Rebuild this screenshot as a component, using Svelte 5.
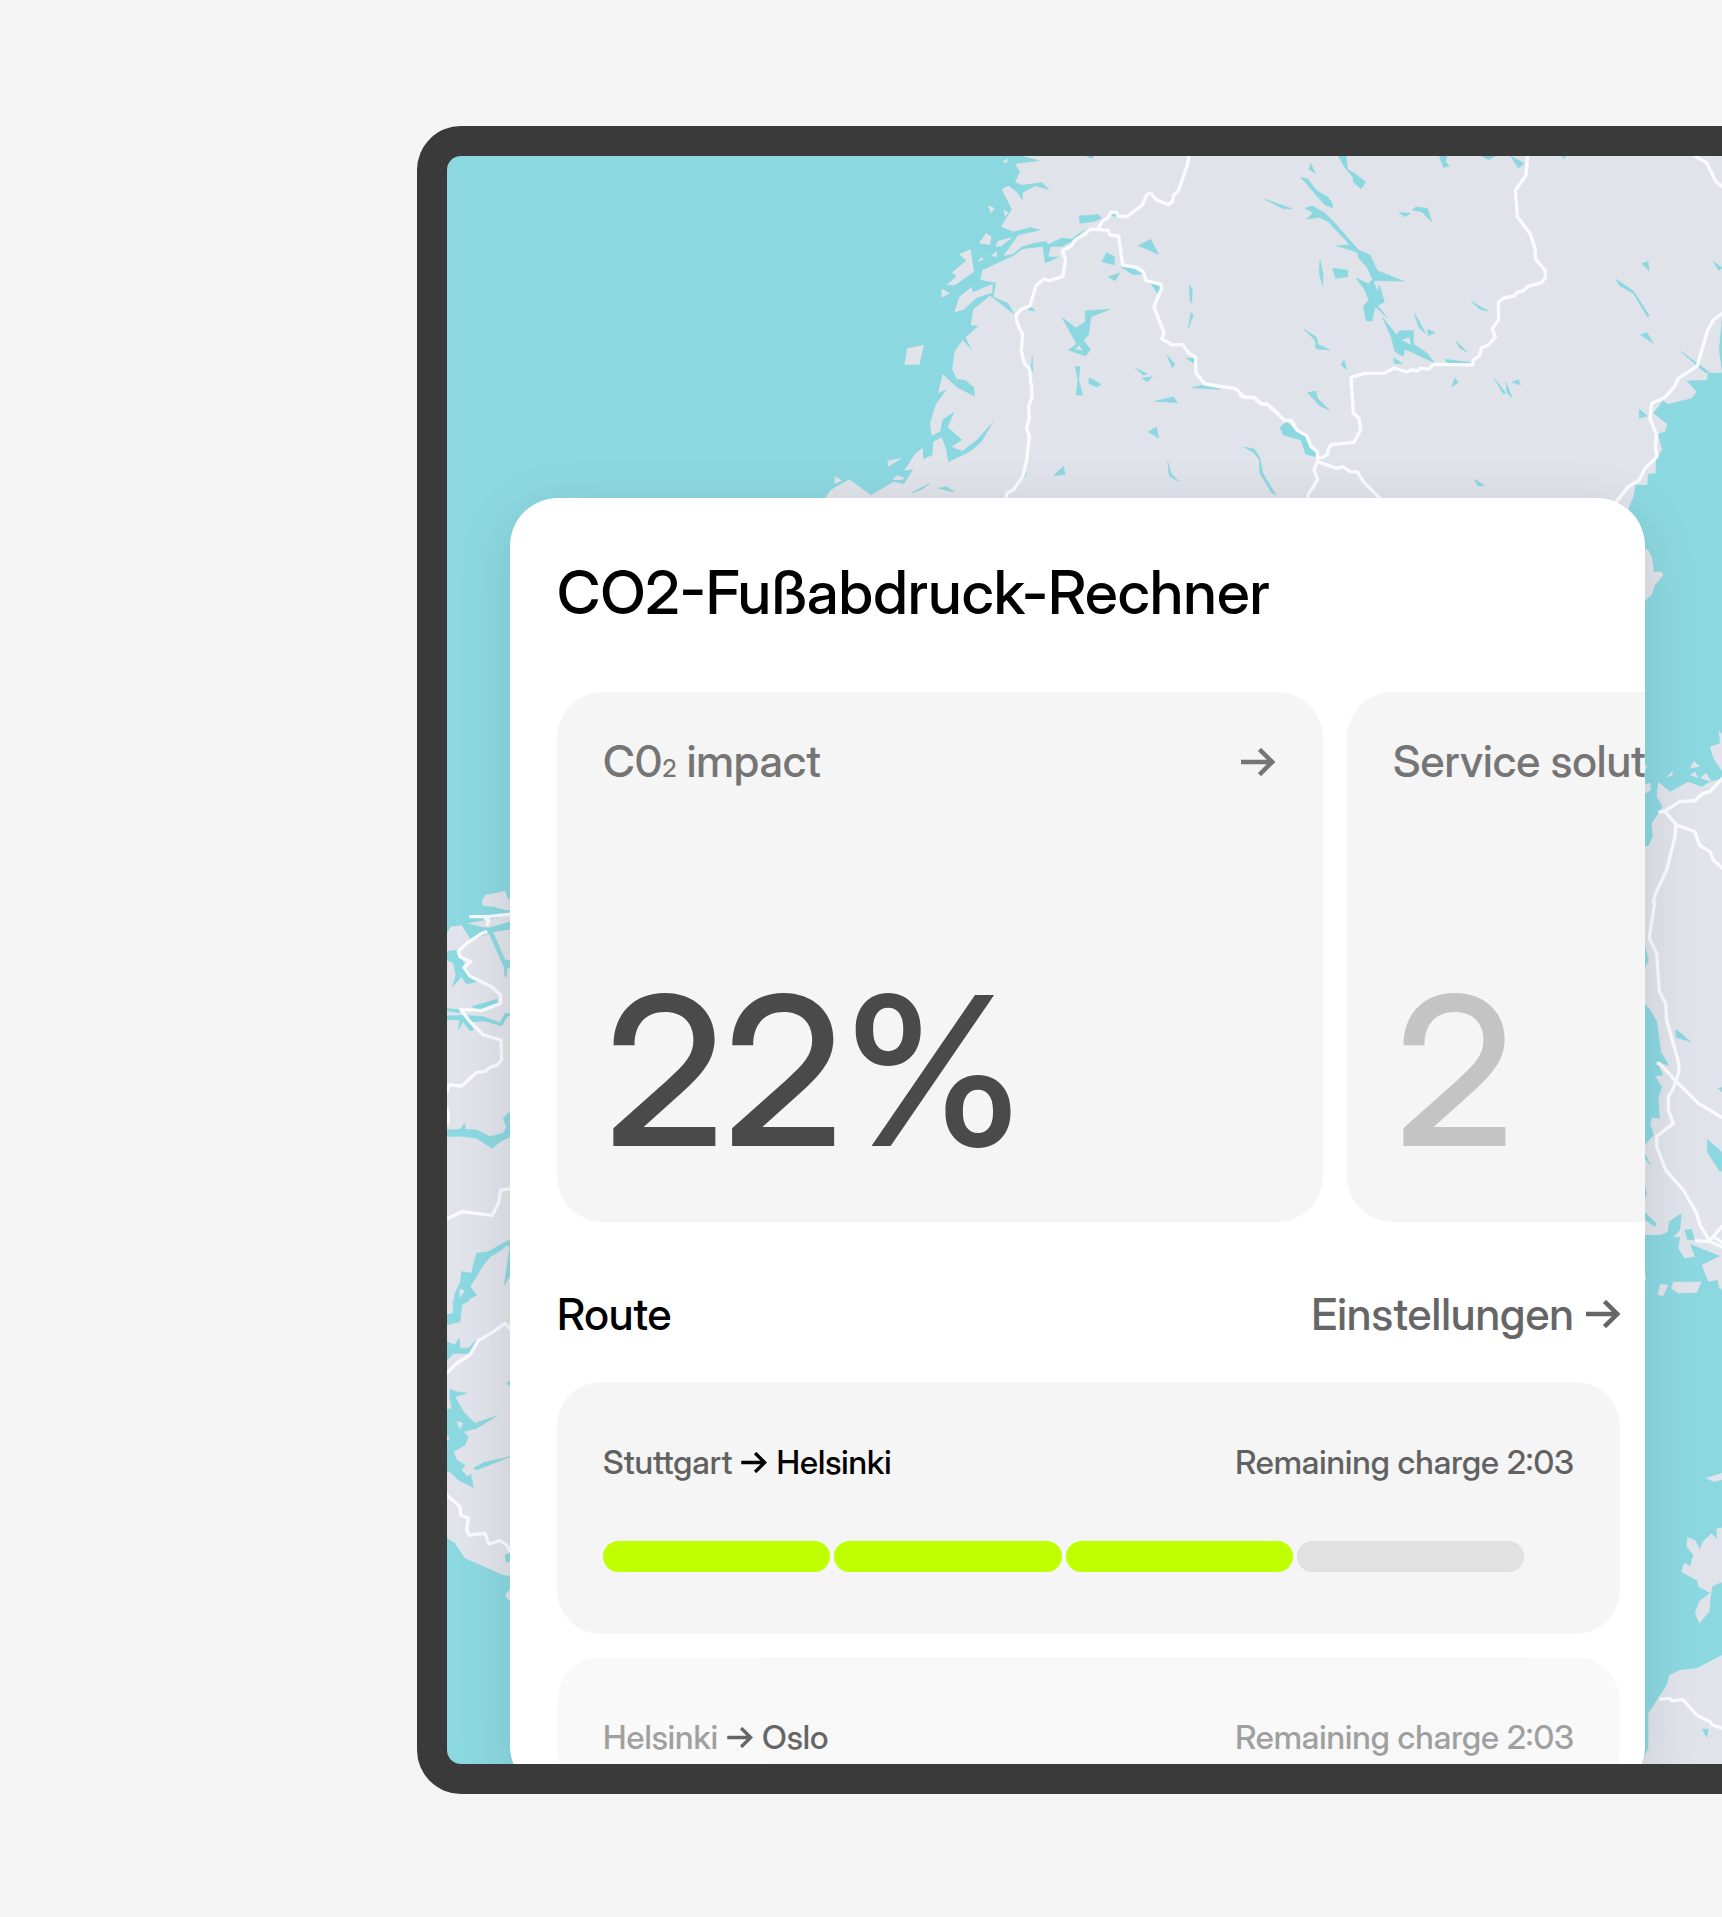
<script>
  const stats = [
    { id: 'impact', value: '22%', muted: false },
    { id: 'service', label: 'Service solut', value: '2', muted: true }
  ];

  const routes = [
    { from: 'Stuttgart', to: 'Helsinki', remaining: '2:03', charge: 3, faded: false },
    { from: 'Helsinki', to: 'Oslo', remaining: '2:03', charge: 0, faded: true }
  ];

  const segments = [1, 2, 3, 4];
</script>

{#snippet arrow()}
  <svg class="arrow" viewBox="0 0 34 28" aria-hidden="true">
    <path d="M0 14H31M18.5 1.4 31.2 14 18.5 26.6" />
  </svg>
{/snippet}

<main class="page">
  <section class="device">
    <svg class="map" viewBox="447 156 1275 1608" preserveAspectRatio="xMinYMin slice" aria-hidden="true">
      <!-- Norwegian coast and inland Sweden -->
      <g transform="translate(800 150) scale(.33333)">
        <path class="land" d="M655 15 720 32 645 42 660 65 645 97 668 105 725 97 750 120 705 108 668 128V152L650 125 625 107 605 118 635 178 603 230 640 245 690 232 725 240 655 255 610 318 640 312 665 290 700 280 738 273 745 283 785 263 815 266 865 230 820 272 785 290 752 290 745 320 780 320 735 340 728 290 668 297 640 318 547 360 541 390 588 398 580 440 625 460 645 495 570 437 520 478 512 525 535 528 497 562 515 600 488 570 463 605 457 658 470 687 495 690 522 712 525 740 470 712 428 672 414 730 440 718 408 762 390 820 395 857 420 845 428 808 463 786 443 832 487 870 455 890 487 903 530 870 582 812 545 875 510 905 445 936 437 893 425 862 400 875 397 915 370 928 368 893 345 912 312 962 340 957 312 1002 280 995 213 1036 148 988 92 1020 75 1045V1090H2480L2500 1040 2507 1005H2542L2544 972 2567 970 2568 925 2587 900 2573 852 2595 845 2602 823 2560 790 2588 752 2605 762 2675 745 2690 725 2660 692 2720 690 2725 668H2766L2757 600 2766 500V15Z" />
        <path class="land" d="M607 35 624 25 620 40ZM563 165 585 175 573 190ZM610 178 626 188 615 200ZM537 280 558 249 574 260 570 285ZM587 290 593 273 637 262 605 288ZM572 318 590 303 592 320ZM532 335 545 320 551 330ZM477 312 512 298 522 365 490 388 465 406 440 405 470 378 455 368 498 332ZM425 416 450 430 425 443ZM463 487 478 440 515 411 518 427 578 402 577 428 530 443 490 480ZM322 595 372 585 358 644H313ZM262 932 305 924 265 950ZM106 979 127 992 102 1001ZM278 990 290 976 315 984 305 990Z" />
        <path class="water" d="M838 198 895 194 905 205 882 214 840 220ZM930 190H950L945 200ZM1015 287 1052 268 1075 313 1035 295ZM920 308 943 320V345L906 335ZM925 380 960 369 945 392ZM962 350 1000 356 1026 372 1000 374ZM1052 400 1084 405 1073 430ZM1168 405 1177 420 1175 460 1170 450ZM1173 488 1180 495 1165 535ZM856 483 930 478 873 500 866 553 850 572 872 598 856 618 806 600 830 582 787 503 828 534 856 515ZM826 650H840L836 690 848 735H828L834 690ZM868 683 903 703 890 711 866 700ZM1006 654 1042 672 1030 675ZM1026 685 1057 680 1042 695ZM1101 616 1125 642 1117 653ZM1160 625 1183 625 1182 640ZM1063 754 1120 741 1133 758ZM1045 846 1069 831 1076 864ZM761 977 790 949 795 973ZM1103 935 1113 970 1136 995 1108 978ZM337 1028 390 1000 362 1020ZM414 1015 440 1010 463 1026ZM690 465 705 483 685 480ZM697 620 699 665 693 655ZM680 970 668 987 660 985ZM1175 713 1215 705 1258 718ZM860 18H880L876 26Z" />
        <path class="land" d="M824 597 838 586 848 602Z" />
        <path class="road" d="M1168 15 1160 52 1135 122 1120 137 1117 155 1105 164 1070 150 1052 129 1040 135 1027 165 980 200 955 198 950 187H932L925 203 908 213 892 238 870 238 855 253 825 270 815 287 787 302 797 330 788 380 748 392 732 387 708 407 690 468 665 477 648 495 650 513 660 540 668 550 664 605 673 640 688 655 697 738 686 770 688 805 680 835 688 858 680 930 668 980 640 1020 620 1030 618 1050" />
        <path class="road" d="M892 238 925 241 930 255 956 258 968 345 1010 352 1030 365 1038 392 1083 403 1085 415 1062 470 1092 548 1085 567 1117 585 1147 583 1165 608 1187 622 1188 670 1215 702 1307 716 1335 742 1362 742 1383 761 1400 761 1440 795" />
      </g>

      <!-- Lakes, highways and the Gulf of Bothnia shore -->
      <g transform="translate(1240 150) scale(.33333)">
        <path class="water" d="M295 18H318L323 58 350 75 377 96 363 116 342 98 338 80 313 50ZM212 40 226 70 207 58ZM182 82 203 87 230 122 262 140 277 160V173L255 165ZM75 148 155 176 130 176ZM195 175 217 168 255 190 285 220 355 300 390 315 412 362 490 393 400 392 380 350 357 325 353 307 290 287 330 285 265 215 240 202 200 207 220 188ZM477 188 512 190 495 200ZM516 180 528 171 562 175 575 215 545 185ZM598 18H620L617 35 628 48 610 52ZM725 18H765L745 29ZM812 18 852 40 835 54ZM965 18H975L972 26ZM240 330 249 370 248 408 238 370ZM278 355 323 361V380L287 385ZM348 384 385 402 398 388 412 425 418 405 433 455 412 467 442 503 406 470 396 514 378 512 370 470 386 450 375 420ZM428 503 470 555 480 542H520V583L560 608 583 638 495 597 490 619 465 605 455 565ZM695 455 745 483 720 478ZM524 490 558 552 535 530ZM563 538 585 548 565 557ZM192 538 230 562 233 583 270 600 228 596 225 570ZM461 623 487 641 463 640ZM312 630 320 658 303 645ZM648 573 683 607 660 595ZM615 628 695 638 625 642ZM645 683 654 697 635 711ZM763 685 797 728 790 732ZM798 697 816 742 802 730ZM816 697 835 689 841 704ZM203 728 228 723 232 745 268 780 240 768ZM120 833 140 815 160 835 195 855 215 890 235 910V922L197 912 183 870 130 855ZM12 891 43 897 60 925 68 968 107 1035 95 1028 60 970 58 930 42 908ZM702 987 734 1007 714 1007ZM1205 340 1224 335 1227 362ZM1127 387 1180 423 1228 497 1222 500 1180 430 1140 408ZM1420 335 1446 353 1437 362ZM1202 555 1220 547 1240 580ZM1322 604 1408 667 1396 668ZM1198 778 1222 798 1198 805Z" />
        <path class="land" d="M485 570 508 562 514 585Z" />
        <path class="road" d="M863 15 858 75 826 122 832 200 870 250 885 295 887 328 916 362V382L905 398 862 410 852 422 830 428 823 438 792 444 775 457 776 508 756 537 767 560 745 585 725 593 718 617 700 630 698 645 580 643 565 658 540 655 533 663 515 660 500 666 463 654 432 670 372 670 333 682 340 790 357 805 362 840 342 877 275 884 265 895 263 912 250 922 232 922" />
        <path class="road" d="M-3 735 15 743 40 742 65 762 82 763 135 812 155 812 170 840 200 857 213 890 232 905 233 932 222 960 233 988 204 1035V1050M233 935 290 955 308 950 330 965 353 966 370 995 420 1045M1360 15 1400 38 1428 95 1450 112M1450 488 1420 510 1402 543 1372 648 1315 685 1303 710 1275 742 1235 760 1230 805 1250 855 1246 890 1251 920 1215 955 1198 990 1165 1010 1125 1060" />
      </g>

      <!-- Danish and German coast -->
      <g transform="translate(410 860) scale(.33333)">
        <path class="land" d="M108 225 122 200 155 196 178 232 220 215 232 205 172 190 200 185 300 165H360V1330H108ZM215 125 225 105 285 93 295 120 360 110V150H285L250 140 220 138Z" />
        <path class="water" d="M108 275 145 270 165 320 200 365 170 372 155 350 128 380 138 345 130 308 108 300ZM235 215 250 220 285 300 310 305V320L290 325V350L285 348 282 320ZM175 208 240 203 310 183V205L250 215 180 240ZM185 440 260 418 265 430 215 452ZM108 445 150 450V458L108 452ZM108 468 160 466 220 470 270 488 285 460 310 462V468L292 468 275 498 225 483 180 485 190 510 180 512 160 485 145 510 150 480 108 478ZM108 810 150 808 165 790V808L200 810 240 830 280 820 290 800 280 775 310 745V825L270 845 247 865 200 835 150 828 108 830ZM310 1135 270 1155 235 1175 200 1180 190 1215 185 1240 155 1235 150 1270 135 1300 130 1350 108 1365V1390H145L155 1330 200 1305 180 1280 205 1240 220 1215 240 1190 275 1170 290 1155 300 1160 283 1275 310 1230Z" />
        <path class="land" d="M148 1287 165 1290 150 1315Z" />
        <path class="road" d="M178 170H232L315 161M222 173 237 180 230 197M232 215 215 220 170 250 145 275 150 290 183 305 162 322 180 348 245 380 272 405V430L215 452 152 448 180 485 220 525 273 540 275 600 262 615 240 622 225 635 200 637 155 678 118 675 108 700M111 740 115 768 113 795M315 985 272 990 265 1030 247 1066 155 1055 108 1078" />
      </g>
      <g transform="translate(410 1300) scale(.33333)">
        <path class="land" d="M108 5V712L135 730 165 775 240 808 280 826 360 832V5ZM285 885 300 868 315 870V905L295 900Z" />
        <path class="water" d="M130 0H180L155 15 150 65 108 75V45L130 40ZM108 125 135 135 148 115 150 145 175 145 200 120 175 160 130 160 108 185ZM120 268 140 275 170 280 135 290 160 335 195 370 260 348 200 385 160 395 175 410 165 435 130 455 140 480 165 495 155 510 172 530 182 522 190 562 145 540 120 515 108 515V430L120 415 108 400V330L125 325 120 300ZM190 505 220 488 300 470 250 490 200 510ZM290 250 305 238V262ZM285 765 305 758V785H288Z" />
        <path class="land" d="M140 362 160 370 148 388Z" />
        <path class="road" d="M108 222 140 190 180 165 205 122 240 102 285 70 310 95M108 583 150 620 152 645 175 655 170 690 177 705 225 700 237 732 270 722 290 735 300 755" />
      </g>

      <!-- Swedish south-east coast -->
      <g transform="translate(1630 480) scale(.33333)">
        <path class="land" d="M30 203 55 210 67 235 72 275 95 275 100 285 75 315 65 345 30 375ZM280 765 266 752 270 790 240 800 250 835 280 880ZM280 895 240 905 215 920 175 905 120 935 85 905 80 950 98 980 65 1030 68 1070 55 1098H30V1270H280ZM180 865 192 843 210 860ZM180 885 195 875 205 895ZM210 895 228 878 245 905ZM108 893 128 872V885ZM30 920 60 908 63 930 30 950ZM30 860 53 855 40 882Z" />
      </g>
      <g transform="translate(1630 900) scale(.33333)">
        <path class="land" d="M30-10H280V1160L270 1170 262 1140 235 1145 215 1095 270 1068 180 1032 195 1070 163 1075 145 1045 150 1012 130 1010 150 990 155 942 118 965 115 995 92 1005H30ZM90 1152 115 1155 100 1188 83 1185ZM130 1145H215L200 1178 145 1180 123 1165ZM30 1118H45L48 1140 30 1142Z" />
        <path class="water" d="M40 120 55 180 40 212ZM30 300 42 310 60 330 80 365 92 455 115 495 80 485 98 525 75 528 95 562 85 590 88 655 65 652 60 670 70 705 30 750ZM40 755 62 795 40 770ZM40 845 50 880 40 908ZM40 933 78 970 75 980 40 955ZM138 388 182 425 138 412ZM232 718 290 770 280 815 268 812 232 755ZM265 565 280 562V580ZM152 942 118 965 115 995 140 1000ZM165 990 185 988 193 1020 172 1018Z" />
        <path class="road" d="M75 0 58 115 80 160 88 275 107 310 110 360 145 485 147 515 130 565 115 590V630L130 670 80 710V740L108 812 160 870 200 940 210 975 240 1025 195 1022M80 490H88L135 540 205 610 280 655M240 1020 280 975M240 1025 280 1042M250 1010 280 1030" />
      </g>
      <g transform="translate(1630 480) scale(.33333)">
        <path class="road" d="M280 892 240 935 220 940 195 962 150 965 105 993 85 997M105 995 140 1035 195 1055 208 1095 240 1115 250 1140 280 1168M137 1035 135 1070 110 1170 75 1245 68 1270" />
      </g>
      <g transform="translate(1630 1400) scale(.33333)">
        <path class="land" d="M226 235 280 218V238L252 245ZM260 385 280 383V545L248 558 243 580 238 635 208 670 195 640 207 605 240 578 205 560 202 542 153 515 163 488 180 498 190 465 170 440 172 412 195 420 210 448 218 425 245 400 260 418ZM280 763 200 805 150 810 118 825 110 855 55 940V1045L20 1110H280Z" />
        <path class="water" d="M217 988H235L230 1012Z" />
        <path class="road" d="M88 898 120 895 125 903 158 898 200 945 240 965 246 975 280 985" />
      </g>
    </svg>

    <article class="panel">
      <h1>CO2-Fußabdruck-Rechner</h1>

      <div class="stats">
        {#each stats as stat (stat.id)}
          <section class="stat">
            <header>
              <h2>
                {#if stat.label}{stat.label}{:else}C0<small>2</small> impact{/if}
              </h2>
              <button type="button" aria-label="Details">{@render arrow()}</button>
            </header>
            <p class="value" class:muted={stat.muted}>{stat.value}</p>
          </section>
        {/each}
      </div>

      <header class="routes-head">
        <h2>Route</h2>
        <a href="#settings">Einstellungen {@render arrow()}</a>
      </header>

      <ul class="routes">
        {#each routes as route}
          <li class="route" class:faded={route.faded}>
            <div class="trip">
              <p class="leg">
                <span>{route.from}</span>
                {@render arrow()}
                <strong>{route.to}</strong>
              </p>
              <p>Remaining charge {route.remaining}</p>
            </div>
            {#if route.charge}
              <div class="charge" role="meter" aria-label="Charge" aria-valuemin="0" aria-valuemax="4" aria-valuenow={route.charge}>
                {#each segments as segment}
                  <span class:on={segment <= route.charge}></span>
                {/each}
              </div>
            {/if}
          </li>
        {/each}
      </ul>
    </article>
  </section>
</main>

<style>
  :global(body) {
    margin: 0;
    background: #f5f5f5;
  }

  h1,
  h2,
  p,
  ul {
    margin: 0;
    padding: 0;
    font-weight: 500;
  }

  .page {
    box-sizing: border-box;
    min-height: 100vh;
    padding: 126px 0 123px 417px;
    overflow: hidden;
    background: #f5f5f5;
    font-family: 'Inter Display', Inter, 'Liberation Sans', sans-serif;
    font-weight: 500;
    font-variation-settings: 'opsz' 32;
  }

  .device {
    position: relative;
    display: flow-root;
    overflow: hidden;
    border: 30px solid #3a3a3a;
    border-right: 0;
    border-radius: 44px 0 0 44px;
    background: #8cd8e1;
  }

  .map {
    position: absolute;
    inset: 0;
    width: 100%;
    height: 100%;
  }

  .land {
    fill: #e0e3ea;
  }

  .water {
    fill: #8cd8e1;
    stroke: #8cd8e1;
    stroke-width: 2;
  }

  .road {
    fill: none;
    stroke: #fafbff;
    stroke-width: 10;
    stroke-linejoin: round;
  }

  .panel {
    position: relative;
    box-sizing: border-box;
    margin: 342px 77px -30px 63px;
    padding: 60px 25px 0 47px;
    overflow: hidden;
    border-radius: 48px;
    background: #fff;
    box-shadow: 0 12px 56px rgb(0 0 0 / 11%);
  }

  h1 {
    font-size: 60px;
    line-height: 68px;
    white-space: nowrap;
  }

  .stats {
    display: grid;
    grid-auto-flow: column;
    grid-auto-columns: 766px;
    gap: 24px;
    margin: 66px -25px 0 0;
    overflow: hidden;
  }

  .stat {
    display: flex;
    flex-direction: column;
    justify-content: space-between;
    box-sizing: border-box;
    height: 530px;
    padding: 42px 48px 26px 46px;
    border-radius: 46px;
    background: #f5f5f5;
    color: #757575;
  }

  .stat header,
  .routes-head,
  .trip {
    display: flex;
    align-items: center;
    justify-content: space-between;
  }

  h2,
  .routes-head a {
    font-size: 44px;
    line-height: 54px;
    white-space: nowrap;
  }

  small {
    font-size: 24px;
    line-height: 24px;
  }

  button {
    padding: 0;
    border: 0;
    background: none;
    color: inherit;
    font-size: 44px;
    line-height: 54px;
  }

  .arrow {
    width: 34px;
    height: 28px;
    fill: none;
    stroke: currentColor;
    stroke-width: 4.5;
  }

  .value {
    padding-left: 2px;
    color: #4a4a4a;
    font-size: 207px;
    line-height: 250px;
  }

  .value.muted {
    color: #c4c4c4;
  }

  .routes-head {
    margin-top: 65px;
  }

  .routes-head a {
    display: flex;
    align-items: center;
    gap: 12px;
    color: #666;
    text-decoration: none;
  }

  .routes {
    display: grid;
    gap: 23px;
    margin-top: 41px;
    list-style: none;
  }

  .route {
    padding: 60px 46px 62px;
    border-radius: 44px;
    background: #f5f5f5;
  }

  .route.faded {
    padding-bottom: 37px;
    opacity: 0.6;
  }

  .trip {
    color: #616161;
    font-size: 33px;
    line-height: 40px;
    white-space: nowrap;
  }

  .leg {
    display: flex;
    align-items: center;
    gap: 9px;
  }

  .leg .arrow {
    width: 26px;
    height: 21px;
    color: #000;
  }

  strong {
    color: #000;
    font-weight: 500;
  }

  .charge {
    display: grid;
    grid-template-columns: repeat(4, 1fr);
    gap: 4px;
    margin: 59px 50px 0 0;
  }

  .charge span {
    height: 31px;
    border-radius: 16px;
    background: #e1e1e1;
  }

  .charge .on {
    background: #bfff00;
  }
</style>
